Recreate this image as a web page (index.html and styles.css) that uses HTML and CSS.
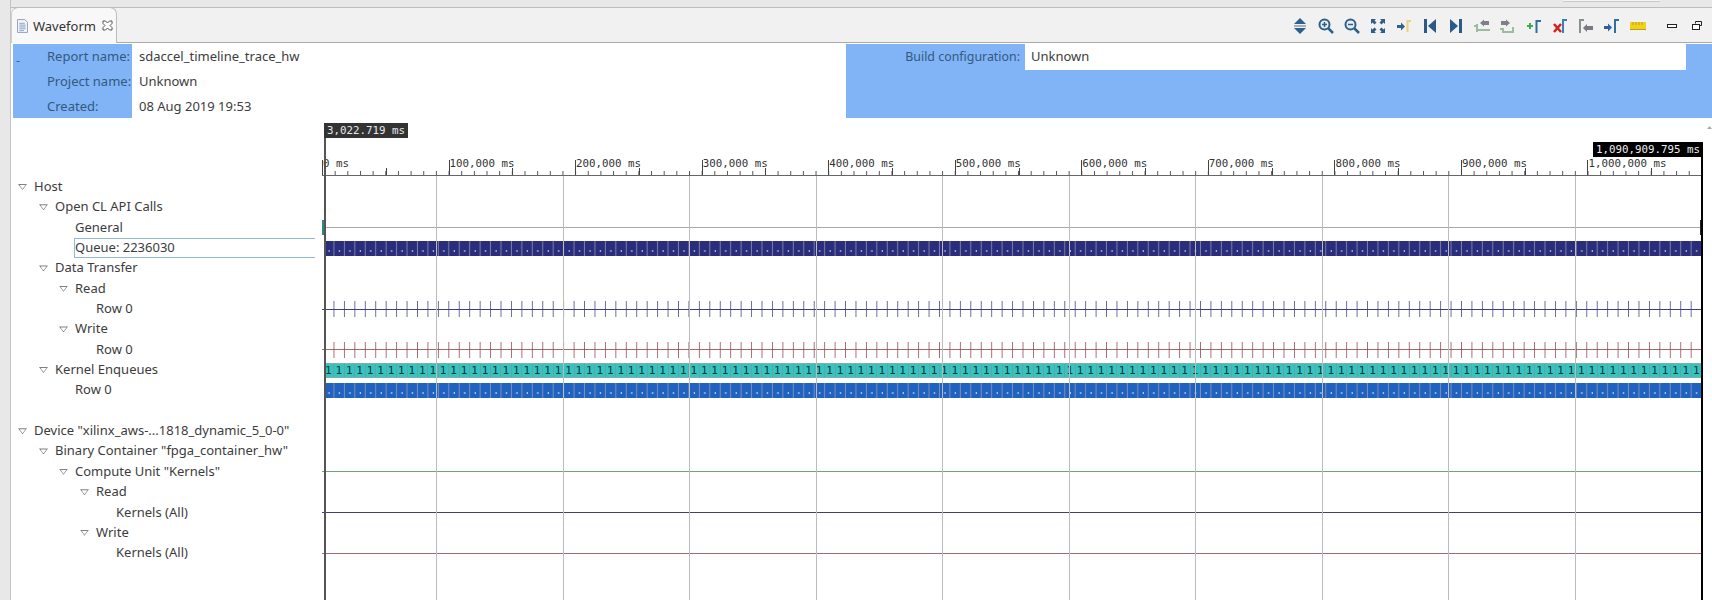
FILE: index.html
```html
<!DOCTYPE html>
<html lang="en">
<head>
  <meta charset="UTF-8">
  <title>Waveform</title>
  <link rel="stylesheet" href="styles.css">
</head>
<body>
  <svg class="defs" width="0" height="0">
    <defs>
      <pattern id="minor-ticks" width="12.655" height="4" patternUnits="userSpaceOnUse">
        <rect width="1" height="4" fill="#555"/>
      </pattern>
      <pattern id="read-ticks" width="10.44" height="16" patternUnits="userSpaceOnUse">
        <rect x="9.7" width="1" height="16" fill="#3a3a80"/>
      </pattern>
      <pattern id="write-ticks" width="10.44" height="16" patternUnits="userSpaceOnUse">
        <rect x="9.7" width="1" height="16" fill="#8f3f48"/>
      </pattern>
      <pattern id="queue-cells" width="10.44" height="15" patternUnits="userSpaceOnUse">
        <rect width="10.44" height="15" fill="#2a2d7c"/>
        <rect x="9.44" width="1" height="15" fill="#7c7ca4"/>
        <rect x="4.5" y="9" width="1" height="2" fill="#cfd2ee"/>
      </pattern>
      <pattern id="row-cells" width="10.44" height="15" patternUnits="userSpaceOnUse">
        <rect width="10.44" height="15" fill="#1f62c0"/>
        <rect x="9.44" width="1" height="15" fill="#7f8fb0"/>
        <rect x="4.5" y="9" width="1" height="2" fill="#d8e6fa"/>
      </pattern>
    </defs>
  </svg>

  <div class="page">
    <div class="gutter"></div>
    <div class="main">
      <div class="top-strip"><div class="top-box"></div></div>

      <div class="tabbar">
        <div class="tab">
          <svg class="tab-icon" viewBox="0 0 12 15"><path d="M.5.5h8l3 3v11H.5z" fill="#f4f6fa" stroke="#8d9aae"/><path d="M2.5 4.5h6M2.5 6.5h7M2.5 8.5h7M2.5 10.5h7M2.5 12.5h5" stroke="#7f9cc4"/></svg>
          <span class="tab-title">Waveform</span>
          <svg class="tab-close" viewBox="0 0 11 11"><path d="M1 1h2.500l2 2 2-2H10v2.500l-2 2 2 2V10H7.500l-2-2-2 2H1V7.500l2-2-2-2z" fill="#fff" stroke="#555"/></svg>
        </div>
        <div class="toolbar">
          <svg class="icon" viewBox="0 0 16 16"><path d="M8 0l6 6H2z" fill="#2f5f8c"/><rect x="2" y="7" width="12" height="2" fill="#9fb2c4"/><path d="M2 10h12l-6 6z" fill="#2f5f8c"/></svg>
          <svg class="icon" viewBox="0 0 16 16"><circle cx="6.500" cy="6.500" r="5" fill="#e6edf3" stroke="#2f5f88" stroke-width="2"/><path d="M4 6.500h5M6.500 4v5" stroke="#2f5f88" stroke-width="1.500"/><path d="M10.500 10.500l4.500 4.500" stroke="#2f5f88" stroke-width="2.500"/></svg>
          <svg class="icon" viewBox="0 0 16 16"><circle cx="6.500" cy="6.500" r="5" fill="#e6edf3" stroke="#2f5f88" stroke-width="2"/><path d="M4 6.500h5" stroke="#2f5f88" stroke-width="1.500"/><path d="M10.500 10.500l4.500 4.500" stroke="#2f5f88" stroke-width="2.500"/></svg>
          <svg class="icon" viewBox="0 0 16 16" fill="#2f5f88"><path d="M1 1h5L4.500 2.500 6.500 4.500 4.500 6.500 2.500 4.500 1 6z"/><path d="M15 1v5l-1.500-1.500-2 2-2-2 2-2L10 1z"/><path d="M1 15v-5l1.500 1.500 2-2 2 2-2 2L6 15z"/><path d="M15 15h-5l1.500-1.500-2-2 2-2 2 2L15 10z"/></svg>
          <svg class="icon" viewBox="0 0 16 16"><path d="M1 7h4V4.500L9 8.500l-4 4V10H1z" fill="#2f5f8c"/><path d="M11.500 14V3H15" fill="none" stroke="#ecd27c" stroke-width="2"/></svg>
          <svg class="icon" viewBox="0 0 16 16" fill="#2c5a88"><rect x="2" y="1" width="3" height="14"/><path d="M14 1v14L6 8z"/></svg>
          <svg class="icon" viewBox="0 0 16 16" fill="#2c5a88"><path d="M2 1v14l8-7z"/><rect x="11" y="1" width="3" height="14"/></svg>
          <svg class="icon" viewBox="0 0 16 16"><path d="M3 6v8M0 8h3v4h13" fill="none" stroke="#9dbb9f" stroke-width="2"/><path d="M6 5l4-3.500V3h5v4h-5v1.500z" fill="#7d8185"/></svg>
          <svg class="icon" viewBox="0 0 16 16"><path d="M13 9v5H3v-3H0" fill="none" stroke="#9dbb9f" stroke-width="2"/><path d="M10 5L6 1.500V3H1v4h5v1.500z" fill="#7d8185"/></svg>
          <svg class="icon" viewBox="0 0 16 16"><path d="M1 8h6M4 5v6" stroke="#3fae50" stroke-width="2"/><path d="M10.500 15V3H15" fill="none" stroke="#2f6f9f" stroke-width="2"/></svg>
          <svg class="icon" viewBox="0 0 16 16"><path d="M11 15V2h4" fill="none" stroke="#3580b8" stroke-width="2"/><path d="M2 6l7 8M9 6l-7 8" stroke="#d41f1f" stroke-width="2.500"/></svg>
          <svg class="icon" viewBox="0 0 16 16"><path d="M2 15V2h4" fill="none" stroke="#8a8f8f" stroke-width="2"/><path d="M5 10l4-4v2h6v4H9v2z" fill="#777b80"/></svg>
          <svg class="icon" viewBox="0 0 16 16"><path d="M0 8h4V5.500L8 9.500l-4 4V11H0z" fill="#2f5f9c"/><path d="M11 15V2h4" fill="none" stroke="#2f6f9f" stroke-width="2"/></svg>
          <svg class="icon" viewBox="0 0 16 16"><rect y="4" width="16" height="8" fill="#f0d21e"/><rect y="11" width="16" height="1" fill="#b89a20"/><path d="M3 4v3M6 4v3M9 4v3M12 4v3" stroke="#c09c10"/></svg>
          <svg class="icon icon-first-win" viewBox="0 0 16 16"><rect x="3.500" y="6.500" width="9" height="3" fill="#fff" stroke="#222"/></svg>
          <svg class="icon icon-win" viewBox="0 0 16 16"><path d="M6.500 5.500v-2h6v4h-2" fill="none" stroke="#222"/><rect x="3.500" y="6.500" width="7" height="5" fill="#fff" stroke="#222"/></svg>
        </div>
      </div>

      <div class="report">
        <div class="report-left">
          <span class="collapse">-</span>
          <div class="report-label">Report name:</div>
          <div class="report-label">Project name:</div>
          <div class="report-label">Created:</div>
        </div>
        <div class="report-values">
          <div class="report-value">sdaccel_timeline_trace_hw</div>
          <div class="report-value">Unknown</div>
          <div class="report-value">08 Aug 2019 19:53</div>
        </div>
        <div class="report-right">
          <div class="build-label">Build configuration:</div>
          <div class="build-value">Unknown</div>
        </div>
      </div>

      <div class="timeline">
        <div class="tree">
          <div class="node open lvl0">Host</div>
          <div class="node open lvl1">Open CL API Calls</div>
          <div class="node lvl2">General</div>
          <div class="node selected">Queue: 2236030</div>
          <div class="node open lvl1">Data Transfer</div>
          <div class="node open lvl2">Read</div>
          <div class="node lvl3">Row 0</div>
          <div class="node open lvl2">Write</div>
          <div class="node lvl3">Row 0</div>
          <div class="node open lvl1">Kernel Enqueues</div>
          <div class="node lvl2">Row 0</div>
          <div class="node"></div>
          <div class="node open lvl0">Device "xilinx_aws-...1818_dynamic_5_0-0"</div>
          <div class="node open lvl1">Binary Container "fpga_container_hw"</div>
          <div class="node open lvl2">Compute Unit "Kernels"</div>
          <div class="node open lvl3">Read</div>
          <div class="node lvl4">Kernels (All)</div>
          <div class="node open lvl3">Write</div>
          <div class="node lvl4">Kernels (All)</div>
        </div>

        <div class="chart">
          <div class="ruler">
            <div class="majors">
              <svg class="minor-ticks"><rect width="100%" height="100%" fill="url(#minor-ticks)"/></svg>
              <div class="major">0 ms</div>
              <div class="major">100,000 ms</div>
              <div class="major">200,000 ms</div>
              <div class="major">300,000 ms</div>
              <div class="major">400,000 ms</div>
              <div class="major">500,000 ms</div>
              <div class="major">600,000 ms</div>
              <div class="major">700,000 ms</div>
              <div class="major">800,000 ms</div>
              <div class="major">900,000 ms</div>
              <div class="major">1,000,000 ms</div>
            </div>
          </div>

          <div class="tracks">
            <div class="track"></div>
            <div class="track"></div>
            <div class="track line-gray"></div>
            <div class="track"><svg class="cells"><rect width="100%" height="100%" fill="url(#queue-cells)"/></svg></div>
            <div class="track"></div>
            <div class="track"></div>
            <div class="track line-navy"><svg class="ticks"><rect width="100%" height="100%" fill="url(#read-ticks)"/></svg></div>
            <div class="track"></div>
            <div class="track line-red"><svg class="ticks"><rect width="100%" height="100%" fill="url(#write-ticks)"/></svg></div>
            <div class="track"><div class="bar-teal">111111111111111111111111111111111111111111111111111111111111111111111111111111111111111111111111111111111111111111111111111111111111</div></div>
            <div class="track"><svg class="cells"><rect width="100%" height="100%" fill="url(#row-cells)"/></svg></div>
            <div class="track"></div>
            <div class="track"></div>
            <div class="track"></div>
            <div class="track line-green"></div>
            <div class="track"></div>
            <div class="track line-navy"></div>
            <div class="track"></div>
            <div class="track line-red"></div>
          </div>

          <div class="gridlines">
            <div class="gridline"></div>
            <div class="gridline"></div>
            <div class="gridline"></div>
            <div class="gridline"></div>
            <div class="gridline"></div>
            <div class="gridline"></div>
            <div class="gridline"></div>
            <div class="gridline"></div>
            <div class="gridline"></div>
            <div class="gridline"></div>
          </div>
          <div class="stub stub-start"></div>
          <div class="stub stub-end"></div>
          <div class="cursor cursor-start"></div>
          <div class="cursor cursor-end"></div>
          <div class="cursor-label label-start">3,022.719 ms</div>
          <div class="cursor-label label-end">1,090,909.795 ms</div>
        </div>

        <div class="scroll-side"><span class="scroll-arrow"></span></div>
      </div>
    </div>
  </div>
</body>
</html>
```

FILE: styles.css
```css
html, body {
  margin: 0;
  height: 100%;
  overflow: hidden;
}
body {
  font-family: "Noto Sans", sans-serif;
  font-size: 13px;
  color: #3c3c3c;
  background: #fff;
}
.defs {
  position: absolute;
}
.page {
  display: flex;
  height: 600px;
}
.gutter {
  width: 10px;
  background: #e8e8e8;
  border-right: 1px solid #c4c4c4;
  flex: none;
}
.main {
  flex: 1;
  min-width: 0;
  display: flex;
  flex-direction: column;
}

/* top of the window */
.top-strip {
  height: 7px;
  background: #e8e8e8;
  display: flex;
  justify-content: flex-end;
  padding-right: 52px;
}
.top-box {
  width: 97px;
  height: 1px;
  background: #f4f4f4;
  border-bottom: 1px solid #c8c8c8;
}
.tabbar {
  height: 36px;
  box-sizing: border-box;
  background: #f1f1f1;
  border-top: 1px solid #bdbdbd;
  border-bottom: 1px solid #a9a9a9;
  display: flex;
  align-items: center;
}
.tab {
  width: 106px;
  height: 36px;
  margin-top: -1px;
  box-sizing: border-box;
  background: #f8f8f8;
  border: 1px solid #bdbdbd;
  border-bottom: none;
  border-left-color: #cfcfcf;
  border-radius: 7px 7px 0 0;
  display: flex;
  align-items: center;
  padding-left: 5px;
  align-self: flex-start;
}
.tab-icon {
  width: 11px;
  height: 14px;
}
.tab-title {
  margin-left: 5px;
  font-size: 13px;
  color: #333;
}
.tab-close {
  width: 11px;
  height: 11px;
  margin-left: 6px;
}
.toolbar {
  margin: 2px 0 0 auto;
  padding-right: 7px;
  display: flex;
  gap: 10px;
}
.icon {
  width: 16px;
  height: 16px;
  flex: none;
}
.icon-first-win {
  margin-left: 8px;
}
.icon-win {
  margin-left: -1px;
}

/* report header */
.report {
  margin: 1px 0 1px 2px;
  height: 74px;
  display: flex;
  flex: none;
}
.report-left {
  width: 119px;
  padding-left: 34px;
  box-sizing: border-box;
  background: #80b4f6;
  position: relative;
  color: #34597f;
}
.collapse {
  position: absolute;
  left: 3px;
  top: 7px;
  color: #44688c;
}
.report-label, .report-value {
  height: 25px;
  line-height: 24px;
}
.report-values {
  width: 714px;
  padding-left: 7px;
  box-sizing: border-box;
}
.report-right {
  flex: 1;
  background: #80b4f6;
  display: flex;
  align-items: flex-start;
}
.build-label {
  width: 174px;
  text-align: right;
  height: 25px;
  line-height: 26px;
  font-size: 12.400px;
  color: #34597f;
}
.build-value {
  width: 655px;
  height: 26px;
  line-height: 24px;
  margin-left: 5px;
  padding-left: 6px;
  background: #fff;
}

/* waveform area */
.timeline {
  flex: 1;
  min-height: 0;
  display: flex;
}
.tree {
  width: 311px;
  flex: none;
  padding-top: 58px;
  box-sizing: border-box;
}
.node {
  height: 20.350px;
  line-height: 18px;
  position: relative;
  white-space: nowrap;
  box-sizing: border-box;
  padding-left: var(--indent);
}
.lvl0 { --indent: 23px; }
.lvl1 { --indent: 44px; }
.lvl2 { --indent: 64px; }
.lvl3 { --indent: 85px; }
.lvl4 { --indent: 105px; }
.open::before, .open::after {
  content: "";
  position: absolute;
  clip-path: polygon(0 0, 100% 0, 50% 100%);
}
.open::before {
  left: calc(var(--indent) - 16px);
  top: 7px;
  width: 9px;
  height: 6px;
  background: #808080;
}
.open::after {
  left: calc(var(--indent) - 14.500px);
  top: 8px;
  width: 6px;
  height: 4px;
  background: #fff;
}
.selected {
  border: 1px solid #8fbcd4;
  border-right: none;
  margin: 0 7px 0 63px;
  padding-left: 0;
  line-height: 16px;
}

.chart {
  width: 1381px;
  flex: none;
  position: relative;
  overflow: hidden;
}
.ruler {
  height: 57px;
  box-sizing: border-box;
  border-bottom: 1px solid #666;
  display: flex;
  align-items: flex-end;
}
.majors {
  display: flex;
  height: 15px;
  flex: 1;
  position: relative;
}
.minor-ticks {
  position: absolute;
  left: 0;
  bottom: 0;
  width: 100%;
  height: 4px;
}
.major {
  flex: 0 0 126.550px;
  box-sizing: border-box;
  border-left: 1px solid #444;
  position: relative;
  font: 10.800px/8px "DejaVu Sans Mono", monospace;
  color: #333;
  white-space: nowrap;
}
.major::after {
  content: "";
  position: absolute;
  left: 50%;
  bottom: 0;
  width: 1px;
  height: 7px;
  background: #444;
}
.tracks {
  padding-top: 1px;
}
.track {
  height: 20.350px;
  display: flex;
  align-items: center;
  background-repeat: no-repeat;
  background-position: center;
  background-size: 100% 1px;
}
.line-gray { background-image: linear-gradient(#a9a9a9, #a9a9a9); }
.line-navy { background-image: linear-gradient(#3f3f80, #3f3f80); }
.line-red { background-image: linear-gradient(#a06a70, #a06a70); }
.line-green { background-image: linear-gradient(#6da673, #6da673); }

.cells, .ticks, .bar-teal {
  margin-left: 2px;
  width: 1378px;
  flex: none;
}
.cells {
  height: 15px;
}
.ticks {
  height: 16px;
}
.bar-teal {
  height: 15px;
  box-sizing: border-box;
  background: repeating-linear-gradient(90deg, #37c4bf 0 9.440px, #5fa5a8 9.440px 10.440px);
  border: solid #79b0b0;
  border-width: 1px 0;
  font: 11px/13px "DejaVu Sans Mono", monospace;
  color: #07393c;
  letter-spacing: 3.820px;
  padding-left: 1px;
  white-space: nowrap;
}

/* things drawn over the tracks */
.gridlines {
  position: absolute;
  top: 57px;
  left: 114px;
  right: 0;
  bottom: 0;
  display: flex;
}
.gridline {
  flex: 0 0 126.550px;
  box-sizing: border-box;
  border-left: 1px solid #bcbcbc;
}
.cursor {
  position: absolute;
  width: 2px;
  bottom: 0;
}
.cursor-start {
  left: 2px;
  top: 4px;
  background: #555;
}
.cursor-end {
  right: 0;
  top: 38px;
  background: #000;
}
.cursor-label {
  position: absolute;
  height: 15px;
  box-sizing: border-box;
  padding: 0 3px;
  font: 10.800px/15px "DejaVu Sans Mono", monospace;
  white-space: nowrap;
}
.label-start {
  left: 2px;
  top: 4px;
  background: #333;
  color: #e8e8e8;
}
.label-end {
  right: 0;
  top: 23px;
  background: #000;
  color: #eee;
}
.stub {
  position: absolute;
  top: 101px;
  height: 15px;
}
.stub-start {
  left: 0;
  width: 2px;
  background: #2a8a80;
}
.stub-end {
  right: 0;
  width: 3px;
  background: #222;
}
.scroll-side {
  flex: 1;
  position: relative;
}
.scroll-arrow {
  position: absolute;
  right: 0;
  top: 7px;
  width: 5px;
  height: 3px;
  background: #aaa;
  clip-path: polygon(50% 0, 100% 100%, 0 100%);
}
```
